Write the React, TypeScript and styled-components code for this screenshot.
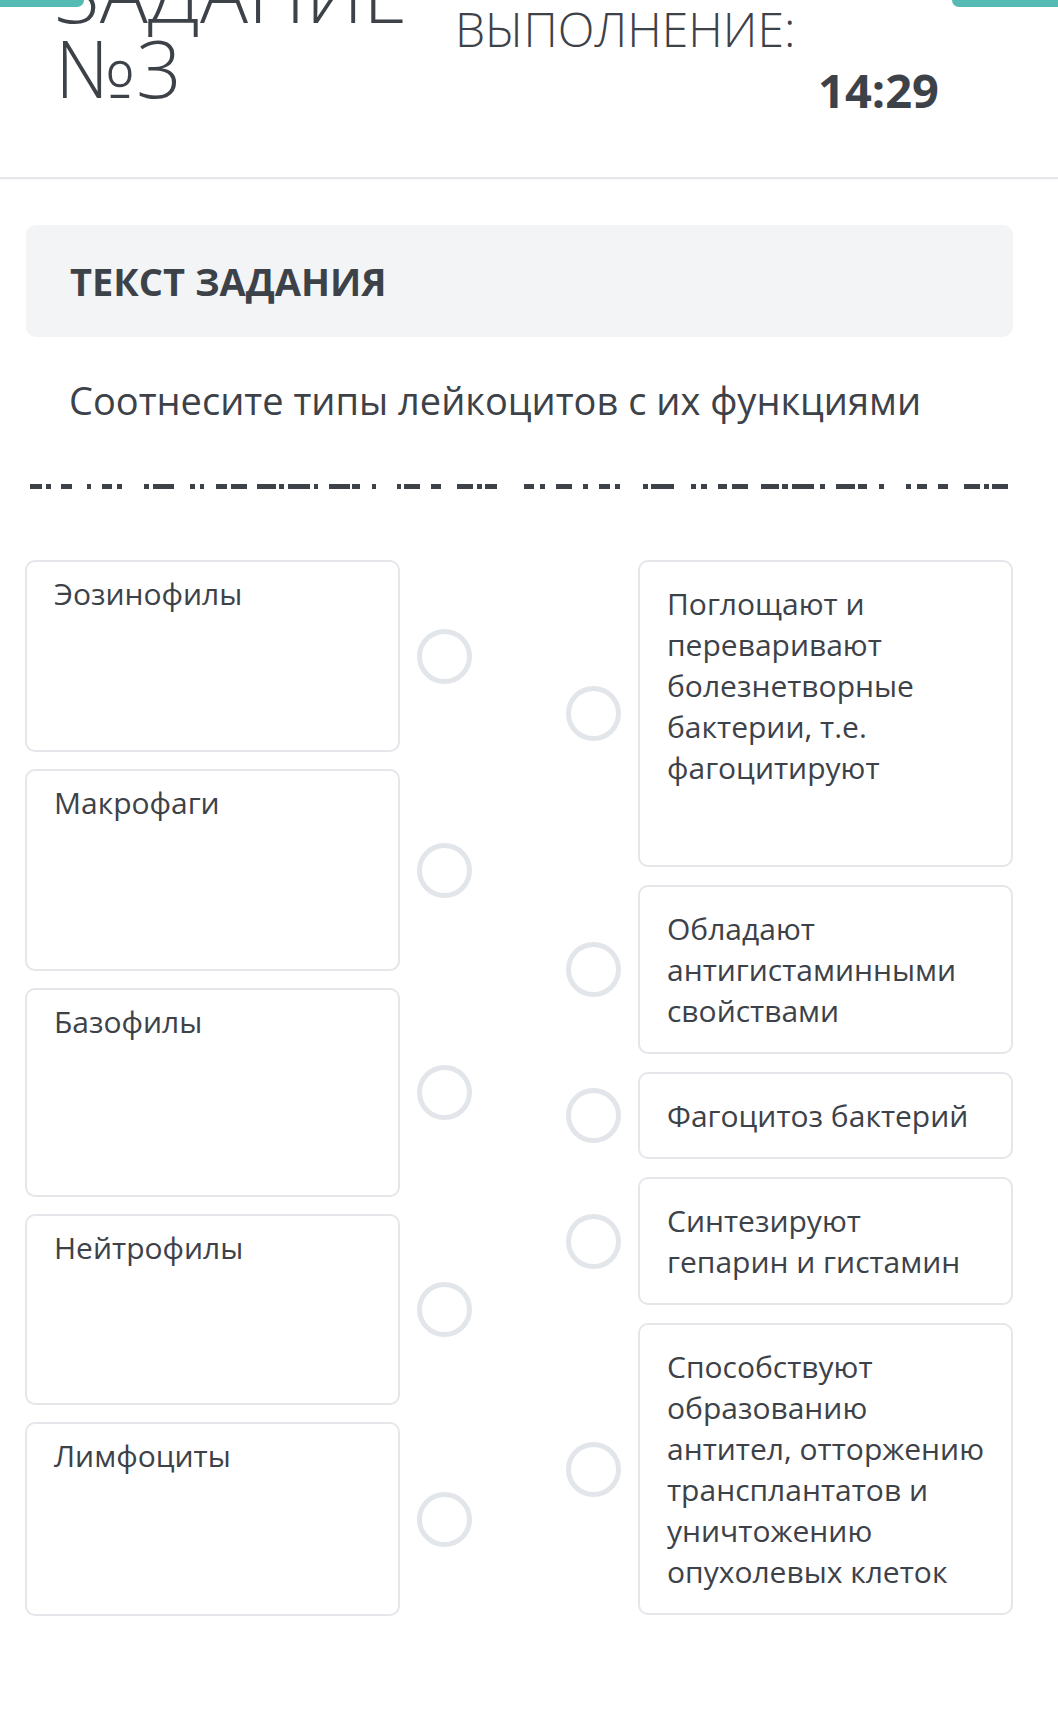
import styled, { createGlobalStyle } from 'styled-components';

const GlobalStyle = createGlobalStyle`
  html, body {
    margin: 0;
    padding: 0;
    background: #ffffff;
  }
  body {
    font-family: "Open Sans", "Liberation Sans", sans-serif;
    color: #3d4249;
  }
`;

const leftItems = [
  { text: 'Эозинофилы', height: 192 },
  { text: 'Макрофаги', height: 202 },
  { text: 'Базофилы', height: 209 },
  { text: 'Нейтрофилы', height: 191 },
  { text: 'Лимфоциты', height: 194 },
];

const rightItems = [
  { text: 'Поглощают и переваривают болезнетворные бактерии, т.е. фагоцитируют', height: 307 },
  { text: 'Обладают антигистаминными свойствами' },
  { text: 'Фагоцитоз бактерий' },
  { text: 'Синтезируют гепарин и гистамин' },
  { text: 'Способствуют образованию антител, отторжению трансплантатов и уничтожению опухолевых клеток' },
];

// the strip of a cropped text line under the task text, in page x
const dashes: [number, number][] = [
  [30, 42], [46, 51], [61, 72], [87, 91], [102, 112], [117, 122], [144, 149], [153, 174],
  [190, 195], [200, 204], [216, 227], [231, 247], [257, 276], [279, 284], [288, 310],
  [314, 318], [329, 350], [352, 360], [372, 376], [397, 401], [404, 420], [431, 441],
  [457, 473], [477, 482], [485, 497],
  [524, 534], [540, 545], [556, 572], [583, 588], [599, 610], [615, 620], [643, 648],
  [651, 674], [691, 696], [701, 707], [718, 727], [732, 748], [761, 779], [782, 788],
  [792, 814], [820, 825], [836, 855], [858, 867], [879, 884], [906, 911], [917, 927],
  [938, 948], [964, 980], [984, 989], [992, 1008],
];

export default function App() {
  return (
    <>
      <GlobalStyle />
      <Page>
        <Tabs>
          <Tab $side="left" />
          <Tab $side="right" />
        </Tabs>
        <Header>
          <Title>
            ЗАДАНИЕ
            <br />
            №3
          </Title>
          <TimeBlock>
            <TimeLabel>ВЫПОЛНЕНИЕ:</TimeLabel>
            <TimeValue>14:29</TimeValue>
          </TimeBlock>
        </Header>
        <Content>
          <TaskBox>
            <TaskHeading>ТЕКСТ ЗАДАНИЯ</TaskHeading>
          </TaskBox>
          <TaskText>Соотнесите типы лейкоцитов с их функциями</TaskText>
          <Dashes viewBox="25 0 988 6" width="988" height="6">
            {dashes.map(([a, b]) => (
              <rect key={a} x={a} y={0} width={b - a} height={5} fill="#3d4249" />
            ))}
          </Dashes>
          <Match>
            <Column $gap={17}>
              {leftItems.map((item) => (
                <Row key={item.text}>
                  <Card $side="left" $height={item.height}>
                    {item.text}
                  </Card>
                  <Dot />
                </Row>
              ))}
            </Column>
            <Column $gap={18}>
              {rightItems.map((item) => (
                <Row key={item.text}>
                  <Dot />
                  <Card $side="right" $height={item.height}>
                    {item.text}
                  </Card>
                </Row>
              ))}
            </Column>
          </Match>
        </Content>
      </Page>
    </>
  );
}

const Page = styled.div`
  position: relative;
  width: 1058px;
  min-height: 1732px;
  overflow: hidden;
  background: #ffffff;
`;

const Tabs = styled.div`
  position: absolute;
  top: 0;
  left: 0;
  right: 0;
  display: flex;
  justify-content: space-between;
  z-index: 2;
`;

const Tab = styled.div<{ $side: 'left' | 'right' }>`
  height: 7px;
  width: ${(p) => (p.$side === 'left' ? '84px' : '106px')};
  background: #55bab3;
  border-radius: ${(p) => (p.$side === 'left' ? '0 0 8px 0' : '0 0 0 8px')};
`;

const Header = styled.header`
  display: flex;
  height: 179px;
  box-sizing: border-box;
  padding-left: 55px;
  border-bottom: 2px solid #e4e6e9;
  box-shadow: 0 1px 2px rgba(0, 0, 0, 0.04);
`;

const Title = styled.h1`
  flex: 0 0 400px;
  margin: -46px 0 0;
  font-size: 80px;
  font-weight: 300;
  line-height: 75px;
  color: #3d4249;
`;

const TimeBlock = styled.div`
  width: 484px;
  padding-top: 1px;
`;

const TimeLabel = styled.div`
  font-size: 48px;
  font-weight: 300;
  line-height: 56px;
`;

const TimeValue = styled.div`
  margin-top: 5px;
  text-align: right;
  font-size: 47px;
  font-weight: 700;
  line-height: 56px;
`;

const Content = styled.main`
  padding: 46px 45px 0 25px;
`;

const TaskBox = styled.section`
  display: flex;
  align-items: center;
  height: 112px;
  margin-left: 1px;
  padding-left: 44px;
  background: #f3f4f6;
  border-radius: 10px;
`;

const TaskHeading = styled.h2`
  margin: 0;
  font-size: 38px;
  font-weight: 700;
  line-height: 52px;
`;

const TaskText = styled.p`
  margin: 37px 0 0;
  padding-left: 44px;
  font-size: 38px;
  line-height: 52px;
`;

const Dashes = styled.svg`
  display: block;
  margin-top: 58px;
`;

const Match = styled.div`
  display: flex;
  justify-content: space-between;
  margin-top: 70px;
`;

const Column = styled.div<{ $gap: number }>`
  display: flex;
  flex-direction: column;
  gap: ${(p) => p.$gap}px;
`;

const Row = styled.div`
  display: flex;
  align-items: center;
  gap: 17px;
`;

const Card = styled.div<{ $side: 'left' | 'right'; $height?: number }>`
  box-sizing: border-box;
  width: ${(p) => (p.$side === 'left' ? '375px' : '375px')};
  min-height: ${(p) => (p.$height ? `${p.$height}px` : 'auto')};
  padding: ${(p) => (p.$side === 'left' ? '11px 24px 11px 27px' : '21px 24px 21px 27px')};
  border: 2px solid #e4e6e9;
  border-radius: 10px;
  font-size: 30px;
  line-height: 41px;
  color: #3d4249;
`;

const Dot = styled.span`
  flex: 0 0 auto;
  box-sizing: border-box;
  width: 55px;
  height: 55px;
  border: 5px solid #e2e5e9;
  border-radius: 50%;
`;
